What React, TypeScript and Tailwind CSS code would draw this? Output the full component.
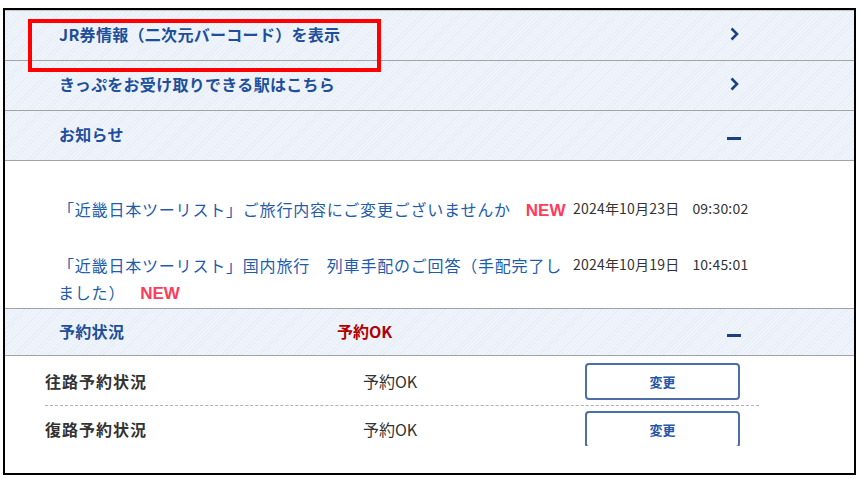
const font = { fontFamily: '"Noto Sans CJK JP", "Noto Sans", sans-serif' };

const headerBg =
  "bg-[repeating-linear-gradient(135deg,#eff4fb_0px,#eff4fb_2px,#e7eef8_2px,#e7eef8_3px)]";

const Chevron = () => (
  <svg width="9" height="14" viewBox="0 0 9 14" className="block">
    <path d="M1.5 1.5 L7 7 L1.5 12.5" fill="none" stroke="#1b4282" strokeWidth="2.6" strokeLinejoin="miter" />
  </svg>
);

const Minus = () => <div className="mt-[9px] h-[3px] w-[14px] bg-[#1b3f80]" />;

const HeaderRow = ({ label, icon, extra, h = "h-[50px]" }: { label: string; icon: "chevron" | "minus"; extra?: React.ReactNode; h?: string }) => (
  <div className={`flex items-center ${h} ${headerBg} border-b border-[#a3a3a3] pb-[3px] pl-[54px]`}>
    <div className="w-[278px] shrink-0 whitespace-nowrap text-[16px] font-bold tracking-[0.3px] text-[#1e4f9c]">{label}</div>
    {extra}
    <div className="ml-auto mr-[110px] flex w-[20px] justify-center">
      {icon === "chevron" ? <Chevron /> : <Minus />}
    </div>
  </div>
);

const news = [
  {
    title: "「近畿日本ツーリスト」ご旅行内容にご変更ございませんか",
    date: "2024年10月23日",
    time: "09:30:02",
  },
  {
    title: "「近畿日本ツーリスト」国内旅行　列車手配のご回答（手配完了しました）",
    date: "2024年10月19日",
    time: "10:45:01",
  },
];

const reservations = [
  { label: "往路予約状況", status: "予約OK" },
  { label: "復路予約状況", status: "予約OK" },
];

export default function App() {
  return (
    <div className="min-h-screen bg-white pl-[3px] pt-[8px]" style={font}>
      <div className="relative h-[467px] w-[853px] border-2 border-black bg-white">
        {/* top links */}
        <div className="border-t border-[#c4c4c4]">
          <HeaderRow label="JR券情報（二次元バーコード）を表示" icon="chevron" h="h-[50px]" />
        </div>
        <HeaderRow label="きっぷをお受け取りできる駅はこちら" icon="chevron" />
        <HeaderRow label="お知らせ" icon="minus" />

        {/* news */}
        <div className="flex h-[148px] flex-col gap-[28px] border-b border-[#a3a3a3] pl-[53px] pt-[35px]">
          {news.map((n, i) => (
            <div key={i} className="flex">
              <div className="w-[515px] shrink-0 text-[16px] leading-[27px] tracking-[0.8px] text-[#1f5cab]">
                {n.title}
                <span className="ml-[15px] inline-block font-['Liberation_Sans',sans-serif] text-[17px] font-bold leading-[27px] tracking-normal text-[#ff3b5c]">
                  NEW
                </span>
              </div>
              <div className="flex gap-[13px] text-[14px] leading-[25px] tracking-[0.2px] text-[#333]">
                <span>{n.date}</span>
                <span>{n.time}</span>
              </div>
            </div>
          ))}
        </div>

        {/* reservation status */}
        <HeaderRow
          label="予約状況"
          icon="minus"
          h="h-[47px]"
          extra={<div className="text-[16px] font-bold text-[#b00000]">予約OK</div>}
        />
        <div className="h-[90px] overflow-hidden pt-[2px]">
          {reservations.map((r, i) => (
            <div key={i} className="ml-[40px] flex w-[714px] items-center border-b border-dashed border-[#b0b0b0] py-[5px]">
              <div className="w-[318px] shrink-0 pb-[2px] text-[16px] font-bold tracking-[1px] text-[#333]">{r.label}</div>
              <div className="w-[222px] shrink-0 pb-[2px] text-[16px] text-[#333]">{r.status}</div>
              <button className="h-[37px] w-[155px] rounded-[4px] border-2 border-[#4d6ea6] bg-white text-[13px] font-bold text-[#2856a6]">
                変更
              </button>
            </div>
          ))}
        </div>

        {/* annotation */}
        <div className="absolute left-[23px] top-[9px] h-[53px] w-[353px] border-4 border-[#ff0000]" />
      </div>
    </div>
  );
}
